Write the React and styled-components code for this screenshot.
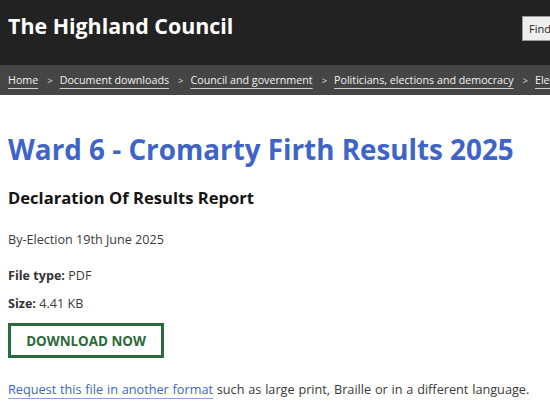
import React from 'react';
import styled, { createGlobalStyle } from 'styled-components';

const GlobalStyle = createGlobalStyle`
  html, body {
    margin: 0;
    padding: 0;
    background: #fff;
    font-family: "Open Sans", "Noto Sans", sans-serif;
    overflow: hidden;
  }
`;

const Header = styled.header`
  background: #222222;
  height: 65px;
  display: flex;
  align-items: flex-start;
  justify-content: space-between;
  padding: 0 0 0 8px;
`;

const SiteTitle = styled.a`
  color: #fff;
  font-size: 21.4px;
  font-weight: 700;
  text-decoration: none;
  line-height: 1;
  margin-top: 15px;
`;

const FindButton = styled.button`
  flex-shrink: 0;
  margin: 16px -14px 0 0;
  height: 25px;
  padding: 0 12px 0 6px;
  background: #eeeeee;
  border: 1px solid #9a9a9a;
  font-family: inherit;
  font-size: 11px;
  color: #222;
  display: flex;
  align-items: center;
  white-space: nowrap;
`;

const Crumbs = styled.nav`
  background: #454545;
  height: 30px;
  display: flex;
  align-items: center;
  padding: 0 8px;
  white-space: nowrap;
  overflow: hidden;
`;

const Crumb = styled.a`
  color: #f2f2f2;
  font-size: 10.7px;
  text-decoration: underline;
  text-decoration-color: #cfcfcf;
  text-underline-offset: 4px;
  text-decoration-thickness: 1px;
`;

const Sep = styled.span`
  color: #e0e0e0;
  font-size: 9.5px;
  margin: 0 7px 0 9px;
`;

const Main = styled.main`
  padding: 37px 8px 0;
`;

const Title = styled.h1`
  color: #3d64c6;
  font-size: 27.8px;
  font-weight: 700;
  line-height: 34px;
  margin: 0 0 21px;
`;

const Subtitle = styled.h2`
  color: #141414;
  font-size: 16.6px;
  font-weight: 700;
  line-height: 22px;
  margin: 0 0 22px;
`;

const Text = styled.p`
  color: #3a3a3a;
  font-size: ${p => p.$size || 12.6}px;
  line-height: 18px;
  margin: 0 0 ${p => p.$gap || 10}px;
  white-space: nowrap;
  word-spacing: ${p => p.$spread || 0}px;
`;

const Label = styled.strong`
  font-weight: 700;
  color: #333;
`;

const Download = styled.a`
  display: flex;
  align-items: center;
  justify-content: center;
  box-sizing: border-box;
  width: 156px;
  height: 35px;
  border: 3px solid #2b6a3a;
  color: #2b6a3a;
  font-weight: 700;
  font-size: 13.4px;
  text-decoration: none;
  margin: 0 0 22px;
`;

const FormatLink = styled.a`
  color: #3d64c6;
  text-decoration: underline;
  text-decoration-color: #8aa3e0;
  text-underline-offset: 4px;
`;

const crumbs = [
  'Home',
  'Document downloads',
  'Council and government',
  'Politicians, elections and democracy',
  'Elections',
];

export default function App() {
  return (
    <>
      <GlobalStyle />
      <Header>
        <SiteTitle href="#">The Highland Council</SiteTitle>
        <FindButton>Find</FindButton>
      </Header>
      <Crumbs>
        {crumbs.map((c, i) => (
          <React.Fragment key={c}>
            {i > 0 && <Sep>&gt;</Sep>}
            <Crumb href="#">{c}</Crumb>
          </React.Fragment>
        ))}
      </Crumbs>
      <Main>
        <Title>Ward 6 - Cromarty Firth Results 2025</Title>
        <Subtitle>Declaration Of Results Report</Subtitle>
        <Text $gap={18}>By-Election 19th June 2025</Text>
        <Text $gap={10}><Label>File type:</Label> PDF</Text>
        <Text $gap={10}><Label>Size:</Label> 4.41 KB</Text>
        <Download href="#">DOWNLOAD NOW</Download>
        <Text $size={12.7} $spread={0.5}>
          <FormatLink href="#">Request this file in another format</FormatLink> such as large print, Braille or in a different language.
        </Text>
      </Main>
    </>
  );
}
